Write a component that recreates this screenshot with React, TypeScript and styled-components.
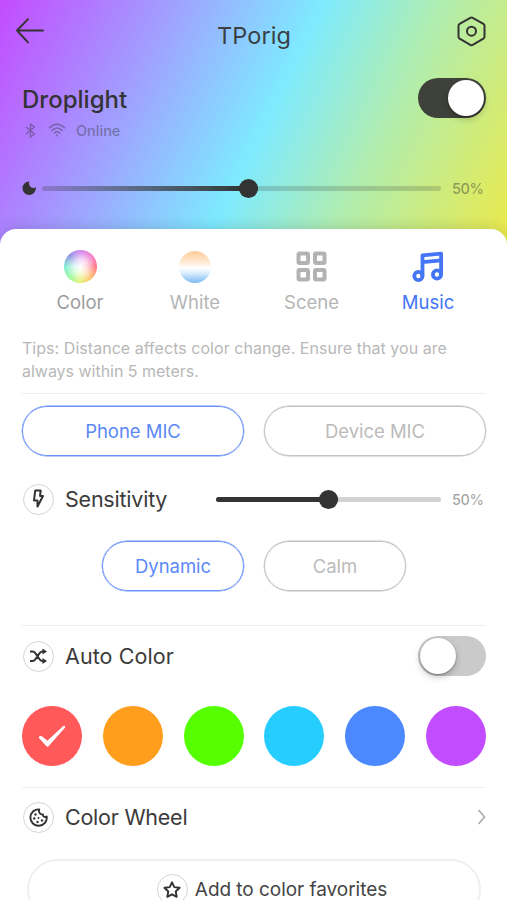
import React from "react";
import styled, { createGlobalStyle } from "styled-components";

const GlobalStyle = createGlobalStyle`
  * { box-sizing: border-box; }
  html, body { margin: 0; height: 100%; overflow: hidden; }
  body { font-family: Inter, "Liberation Sans", sans-serif; color: #333; background: #fff; }
  button { font: inherit; background: none; padding: 0; border: 0; color: inherit; }
  svg { display: block; flex: none; }
`;

const Screen = styled.div`
  width: 507px;
  height: 900px;
  overflow: hidden;
  background: linear-gradient(116deg, #c44bff 0, #a29cff 150px, #7eeaff 291px, #b0edb0 400px, #ebea4b 562px);
`;

const Hero = styled.header`
  height: 229px;
`;

const NavBar = styled.div`
  display: flex;
  height: 62px;
  align-items: center;
  justify-content: space-between;
  padding: 0 21px 0 15px;
`;

const Title = styled.h1`
  margin: 9px 0 0 6px;
  font-size: 23.5px;
  font-weight: 400;
  letter-spacing: 0.1px;
  color: #3a3f44;
`;

const DeviceRow = styled.div`
  display: flex;
  justify-content: space-between;
  height: 58px;
  margin-top: 16px;
  padding: 0 21px 0 22px;
`;

const DeviceName = styled.h2`
  margin: 7px 0 0;
  font-size: 24px;
  line-height: 30px;
  font-weight: 500;
  letter-spacing: 0.02px;
`;

const Status = styled.div`
  display: flex;
  align-items: center;
  height: 20px;
  margin-top: 5px;
  font-size: 14.5px;
  font-weight: 500;
  letter-spacing: 0;
  color: rgba(51, 51, 51, 0.42);
  svg:nth-child(1) { margin-left: 3px; }
  svg:nth-child(2) { margin: 0 10px 0 12px; }
`;

const Switch = styled.button<{ $on?: boolean }>`
  display: flex;
  flex: none;
  width: 68px;
  height: 40px;
  padding: 2px;
  border-radius: 20px;
  justify-content: ${(p) => (p.$on ? "flex-end" : "flex-start")};
  background: ${(p) => (p.$on ? "#3f423b" : "#cacaca")};
`;

const Knob = styled.span`
  width: 36px;
  height: 36px;
  border-radius: 50%;
  background: #fff;
  box-shadow: 0 3px 7px rgba(0, 0, 0, 0.22), 0 1px 2px rgba(0, 0, 0, 0.3);
`;

const BrightnessRow = styled.div`
  display: flex;
  align-items: center;
  height: 30px;
  margin-top: 37px;
  padding-left: 22px;
`;

const Track = styled.div<{ $soft?: boolean }>`
  display: flex;
  align-items: center;
  flex: none;
  width: ${(p) => (p.$soft ? "399px" : "225px")};
  height: 5px;
  border-radius: 3px;
  background: ${(p) => (p.$soft ? "rgba(51,51,51,.2)" : "#d3d3d3")};
`;

const Fill = styled.div<{ $soft?: boolean }>`
  display: flex;
  align-items: center;
  justify-content: flex-end;
  height: 5px;
  border-radius: 3px;
  background: ${(p) => (p.$soft ? "linear-gradient(90deg, rgba(51,51,51,.05), #333 94%)" : "#333")};
`;

const Thumb = styled.span`
  flex: none;
  width: 19px;
  height: 19px;
  border-radius: 50%;
  background: #333;
`;

const Percent = styled.span`
  width: 34px;
  margin-left: 11px;
  font-size: 14.5px;
  font-weight: 500;
  letter-spacing: -0.45px;
  color: rgba(51, 51, 51, 0.45);
`;

const Sheet = styled.main`
  height: 671px;
  padding: 0 21px 0 22px;
  border-radius: 16px 16px 0 0;
  background: #fff;
  box-shadow: 0 -2px 14px rgba(0, 0, 0, 0.13);
`;

const Tabs = styled.nav`
  display: grid;
  grid-template-columns: 116px 114px 119px 114px;
  height: 108px;
`;

const Tab = styled.button<{ $tone?: string }>`
  display: flex;
  flex-direction: column;
  align-items: center;
  justify-content: flex-start;
  padding-top: 20px;
  font-size: 18.5px;
  line-height: 24px;
  color: ${(p) => p.$tone || "#b5b5b5"};
`;

const TabIcon = styled.span`
  display: grid;
  place-items: center;
  height: 35px;
  margin-bottom: 6px;
`;

const ColorDisc = styled.span`
  width: 33px;
  height: 33px;
  border-radius: 50%;
  background: radial-gradient(circle, #fff 0, rgba(255, 255, 255, 0.75) 30%, rgba(255, 255, 255, 0.1) 72%),
    conic-gradient(#c96fee, #fa62b0 60deg, #ff5468 90deg, #ffb150 135deg, #e2f05a 180deg, #82fa87 225deg, #65e8c8 270deg, #757bdf 315deg, #c96fee);
`;

const WhiteDisc = styled.span`
  width: 32px;
  height: 32px;
  border-radius: 50%;
  background: linear-gradient(#ffcc97, #ffe5cc 30%, #fff 54%, #d2e9fc 72%, #79baf3);
`;

const Tips = styled.p`
  margin: 0;
  height: 56px;
  font-size: 16px;
  line-height: 22.5px;
  color: #b8b8b8;
  white-space: nowrap;
`;

const TipLine = styled.span<{ $gap: string }>`
  display: block;
  letter-spacing: ${(p) => p.$gap};
`;

const Section = styled.section<{ $height: number }>`
  height: ${(p) => p.$height}px;
  border-top: 1px solid #efefef;
`;

const Choices = styled.div<{ $top: number }>`
  display: flex;
  justify-content: center;
  gap: 20px;
  padding-top: ${(p) => p.$top}px;
`;

const Pill = styled.button<{ $active?: boolean; $width: number }>`
  width: ${(p) => p.$width}px;
  height: 50px;
  border: 1.5px solid ${(p) => (p.$active ? "#6b94fa" : "#c2c2c2")};
  box-shadow: 0 0 0 0.4px ${(p) => (p.$active ? "#6b94fa" : "#c2c2c2")};
  border-radius: 25px;
  font-size: 18.5px;
  letter-spacing: -0.04px;
  color: ${(p) => (p.$active ? "#5b88f7" : "#bbb")};
`;

const Row = styled.div<{ $top: number; $height: number }>`
  display: flex;
  align-items: center;
  height: ${(p) => p.$height}px;
  margin-top: ${(p) => p.$top}px;
`;

const RoundIcon = styled.span`
  display: grid;
  place-items: center;
  flex: none;
  width: 31px;
  height: 31px;
  margin-left: 1px;
  border: 1.5px solid #d4d4d4;
  border-radius: 50%;
`;

const RowLabel = styled.span<{ $gap?: string }>`
  margin-left: 11px;
  margin-right: auto;
  font-size: 21.5px;
  letter-spacing: ${(p) => p.$gap || "0"};
  color: #3b3b3b;
`;

const Palette = styled.div`
  display: flex;
  justify-content: space-between;
  margin-top: 30px;
`;

const Swatch = styled.button<{ $color: string }>`
  display: grid;
  place-items: center;
  width: 60px;
  height: 60px;
  border-radius: 50%;
  background: ${(p) => p.$color};
`;

const FavoriteButton = styled.button`
  display: flex;
  align-items: center;
  justify-content: center;
  width: 454px;
  height: 61px;
  margin: 22px 0 0 5px;
  border: 2px solid #efefef;
  border-radius: 31px;
  font-size: 19px;
  line-height: 20px;
  letter-spacing: -0.04px;
  color: #444;
  ${RoundIcon} { margin: 0 7px 0 36px; }
`;

const SceneIcon = () => (
  <svg width="31" height="31" viewBox="0 0 31 31" fill="none" stroke="#b3b3b3" strokeWidth="4" strokeLinejoin="round">
    <rect x="2.5" y="2.5" width="9.5" height="9.5" rx="1" />
    <rect x="19" y="2.5" width="9.5" height="9.5" rx="1" />
    <rect x="2.5" y="19" width="9.5" height="9.5" rx="1" />
    <rect x="19" y="19" width="9.5" height="9.5" rx="1" />
  </svg>
);

const MusicIcon = () => (
  <svg width="34" height="33" viewBox="0 0 34 33" fill="none" stroke="#4375f5" strokeWidth="3.8" strokeLinejoin="round">
    <circle cx="7.4" cy="26" r="4.1" />
    <circle cx="26" cy="24.5" r="4.1" />
    <path d="M11.5 26V5.3L30.1 3.6V24.5M11.5 12.2l18.6-1.8" />
  </svg>
);

const colors = ["#ff5959", "#ff9e1c", "#55ff00", "#25ceff", "#4c88ff", "#c24cff"];

export default function App() {
  return (
    <>
      <GlobalStyle />
      <Screen>
        <Hero>
          <NavBar>
            <svg width="30" height="28" viewBox="0 0 30 28" fill="none" stroke="#333" strokeWidth="1.9" strokeLinecap="round" strokeLinejoin="round">
              <path d="M28 13.5H2M13 2.2L2 13.5 13 25.4" />
            </svg>
            <Title>TPorig</Title>
            <svg width="29" height="31" viewBox="0 0 29 31" fill="none" stroke="#333" strokeWidth="2" strokeLinejoin="round">
              <path d="M13.3 1.8Q14.5 1.1 15.7 1.8L26.4 7.8Q27.5 8.5 27.5 9.8V20.6Q27.5 21.9 26.4 22.6L15.7 28.8Q14.5 29.5 13.3 28.8L2.6 22.6Q1.5 21.9 1.5 20.6V9.8Q1.5 8.5 2.6 7.8Z" />
              <circle cx="14.5" cy="15.2" r="4.5" />
            </svg>
          </NavBar>
          <DeviceRow>
            <div>
              <DeviceName>Droplight</DeviceName>
              <Status>
                <svg width="11" height="15" viewBox="0 0 11 15" fill="none" stroke="currentColor" strokeWidth="1.3">
                  <path d="M1 4l8.5 7L5.5 14V1l4 3L1 11" />
                </svg>
                <svg width="18" height="14" viewBox="0 0 18 14" fill="none" stroke="currentColor" strokeWidth="1.5" strokeLinecap="round">
                  <path d="M1.5 4.8Q9-2.2 16.5 4.8M4 7.4Q9 2.7 14 7.4M6.4 10Q9 7.6 11.6 10" />
                  <circle cx="9" cy="12.5" r="1" fill="currentColor" stroke="none" />
                </svg>
                Online
              </Status>
            </div>
            <Switch $on aria-label="Power"><Knob /></Switch>
          </DeviceRow>
          <BrightnessRow>
            <svg width="20" height="14" viewBox="0 0 20 14">
              <path d="M7.4.5A6.7 6.7 0 1 0 13.8 6.3Q11 8 8.7 6 6 3.7 7.4.5Z" fill="#333" />
            </svg>
            <Track $soft><Fill $soft style={{ width: "54.2%" }}><Thumb /></Fill></Track>
            <Percent>50%</Percent>
          </BrightnessRow>
        </Hero>
        <Sheet>
          <Tabs>
            <Tab $tone="#9c9c9c"><TabIcon><ColorDisc /></TabIcon>Color</Tab>
            <Tab><TabIcon><WhiteDisc /></TabIcon>White</Tab>
            <Tab><TabIcon><SceneIcon /></TabIcon>Scene</Tab>
            <Tab $tone="#4375f5"><TabIcon><MusicIcon /></TabIcon>Music</Tab>
          </Tabs>
          <Tips>
            <TipLine $gap="0.04px">Tips: Distance affects color change. Ensure that you are</TipLine>
            <TipLine $gap="-0.02px">always within 5 meters.</TipLine>
          </Tips>
          <Section $height={232}>
            <Choices $top={12}>
              <Pill $active $width={222}>Phone MIC</Pill>
              <Pill $width={222}>Device MIC</Pill>
            </Choices>
            <Row $top={23} $height={40}>
              <RoundIcon>
                <svg width="13" height="20" viewBox="0 0 13 20" fill="none" stroke="#333" strokeWidth="2" strokeLinejoin="round">
                  <path d="M3.2 1.5H8.7L8 7H11L5.5 17.5V11.5H2Z" />
                </svg>
              </RoundIcon>
              <RowLabel $gap="-0.22px">Sensitivity</RowLabel>
              <Track><Fill style={{ width: "54.2%" }}><Thumb /></Fill></Track>
              <Percent>50%</Percent>
            </Row>
            <Choices $top={22}>
              <Pill $active $width={142}>Dynamic</Pill>
              <Pill $width={142}>Calm</Pill>
            </Choices>
          </Section>
          <Section $height={162}>
            <Row $top={10} $height={40}>
              <RoundIcon>
                <svg width="19" height="17" viewBox="0 0 19 17" fill="none" stroke="#333" strokeWidth="2">
                  <path d="M1 3.5H3.5C8 3.5 9 13 13.5 13H15M1 13H3.5C8 13 9 3.5 13.5 3.5H15" />
                  <path d="M13.5.5L18 3.5l-4.5 3ZM13.5 10L18 13l-4.5 3Z" fill="#333" stroke="none" />
                </svg>
              </RoundIcon>
              <RowLabel $gap="0.08px">Auto Color</RowLabel>
              <Switch aria-label="Auto color"><Knob /></Switch>
            </Row>
            <Palette>
              {colors.map((color, index) => (
                <Swatch key={color} $color={color} aria-label={color}>
                  {index === 0 && (
                    <svg width="28" height="23" viewBox="0 0 28 23" fill="#fff">
                      <path d="M1 11.8Q2.3 10.2 4.3 11.5L9.3 15.8 25 1.2Q26.2.3 27 1.2 27.6 2 26.7 3.1L11 20.8Q9.3 22.7 7.8 20.6L1.4 13.4Q.5 12.5 1 11.8Z" />
                    </svg>
                  )}
                </Swatch>
              ))}
            </Palette>
          </Section>
          <Section $height={113}>
            <Row $top={9} $height={40}>
              <RoundIcon>
                <svg width="19" height="19" viewBox="0 0 19 19" fill="none" stroke="#333" strokeWidth="1.9" strokeLinejoin="round">
                  <path d="M10.2 1.2A8.2 8.2 0 1 0 17.7 8.3C15.8 9.7 13.8 8.3 14 6.2 11.8 6.5 9.2 4.6 10.2 1.2Z" transform="translate(0 .2)" />
                  <g fill="#333" stroke="none">
                    <circle cx="6.5" cy="6.5" r="1.2" /><circle cx="5.2" cy="10.5" r="1.2" /><circle cx="9.5" cy="10" r="1" /><circle cx="8.5" cy="14" r="1.2" /><circle cx="13" cy="12.5" r="1.2" />
                  </g>
                </svg>
              </RoundIcon>
              <RowLabel $gap="-0.24px">Color Wheel</RowLabel>
              <svg width="9" height="16" viewBox="0 0 9 16" fill="none" stroke="#aaa" strokeWidth="1.6">
                <path d="M1.5 1l6 7-6 7" />
              </svg>
            </Row>
            <FavoriteButton>
              <RoundIcon>
                <svg width="18" height="18" viewBox="0 0 18 18" fill="none" stroke="#333" strokeWidth="1.9" strokeLinejoin="round">
                  <path d="M9 1.3l2.3 4.8 5.3.7-3.9 3.7 1 5.3L9 13.3l-4.7 2.5 1-5.3L1.4 6.8l5.3-.7Z" />
                </svg>
              </RoundIcon>
              Add to color favorites
            </FavoriteButton>
          </Section>
        </Sheet>
      </Screen>
    </>
  );
}
